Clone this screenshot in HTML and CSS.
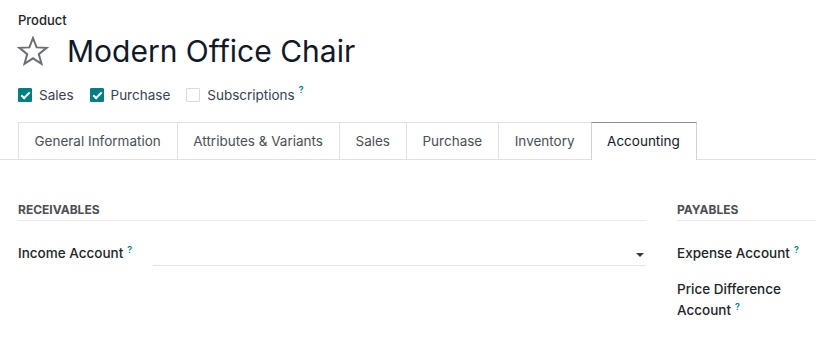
FILE: index.html
```html
<!DOCTYPE html>
<html lang="en">
<head>
    <meta charset="UTF-8">
    <title>Modern Office Chair</title>
    <link rel="stylesheet" href="styles.css">
</head>
<body>
    <div class="sheet">
        <div class="title-block">
            <div class="model-label">Product</div>
            <div class="title-row">
                <svg class="star" width="32" height="30" viewBox="0 0 32 30">
                    <path d="M16 2 L19.6 11.4 L29.6 11.8 L21.8 18.1 L24.5 27.8 L16 22.3 L7.5 27.8 L10.2 18.1 L2.4 11.8 L12.4 11.4 Z" fill="none" stroke="#6b6f75" stroke-width="2" stroke-linejoin="miter"/>
                </svg>
                <h1 class="title">Modern Office Chair</h1>
            </div>
        </div>

        <div class="options">
            <label class="opt"><span class="box checked"></span>Sales</label>
            <label class="opt"><span class="box checked"></span>Purchase</label>
            <label class="opt"><span class="box"></span>Subscriptions<sup class="help">?</sup></label>
        </div>

        <div class="tabs">
            <div class="tab">General Information</div>
            <div class="tab">Attributes &amp; Variants</div>
            <div class="tab">Sales</div>
            <div class="tab">Purchase</div>
            <div class="tab">Inventory</div>
            <div class="tab active">Accounting</div>
        </div>

        <div class="groups">
            <div class="group receivables">
                <div class="group-title">Receivables</div>
                <div class="field">
                    <div class="field-label">Income Account<sup class="help">?</sup></div>
                    <div class="field-input">
                        <span class="caret"></span>
                    </div>
                </div>
            </div>
            <div class="group payables">
                <div class="group-title">Payables</div>
                <div class="field">
                    <div class="field-label">Expense Account<sup class="help">?</sup></div>
                </div>
                <div class="field">
                    <div class="field-label">Price Difference Account<sup class="help">?</sup></div>
                </div>
            </div>
        </div>
    </div>
</body>
</html>
```

FILE: styles.css
```css
body {
    margin: 0;
    font-family: Inter, Roboto, sans-serif;
    font-size: 13.5px;
    color: #212529;
    background-color: #fff;
}

.sheet {
    padding: 11px 0 0 18px;
}

.model-label {
    font-size: 13px;
    font-weight: 500;
    line-height: 18px;
    color: #212529;
}

.title-row {
    display: flex;
    align-items: center;
    gap: 18px;
    margin-top: 3px;
}

.star {
    display: block;
    margin-left: -1px;
}

.title {
    margin: 0;
    font-size: 30px;
    font-weight: 400;
    line-height: 38px;
    color: #111827;
}

.options {
    display: flex;
    align-items: center;
    margin-top: 15px;
    height: 20px;
}

.opt {
    display: flex;
    align-items: center;
    margin-right: 16px;
    color: #374151;
}

.box {
    width: 14px;
    height: 14px;
    box-sizing: border-box;
    border: 1px solid #d8dadd;
    border-radius: 1px;
    margin-right: 7px;
    position: relative;
}

.box.checked {
    background-color: #017e84;
    border-color: #017e84;
}

.box.checked::after {
    content: "";
    position: absolute;
    left: 4px;
    top: 1px;
    width: 3px;
    height: 7px;
    border: solid #fff;
    border-width: 0 2px 2px 0;
    transform: rotate(45deg);
}

.help {
    color: #017e84;
    font-size: 9px;
    font-weight: 600;
    margin-left: 4px;
    vertical-align: baseline;
    line-height: 0;
    position: relative;
    top: -5px;
}

.tabs {
    display: flex;
    margin: 17px 0 0 -18px;
    padding-left: 18px;
    border-bottom: 1px solid #dee2e6;
}

.tab {
    padding: 0 16px 0 15.5px;
    height: 36px;
    line-height: 37px;
    border: 1px solid #dee2e6;
    border-bottom: none;
    margin-right: -1px;
    color: #495057;
    background-color: #fff;
}

.tab.active {
    color: #111827;
    border-color: #cfd3d7;
    border-top-color: #8b8f94;
    margin-bottom: -1px;
    height: 37px;
    position: relative;
}

.groups {
    display: flex;
    margin-top: 42px;
}

.group-title {
    font-size: 12px;
    font-weight: 700;
    text-transform: uppercase;
    color: #4a4f55;
    padding-bottom: 3px;
    border-bottom: 1px solid #e7e9ed;
}

.receivables {
    width: 628px;
}

.payables {
    flex: 1;
    margin-left: 31px;
}

.field {
    display: flex;
    align-items: flex-start;
    margin-top: 22px;
}

.payables .field + .field {
    margin-top: 15px;
}

.field-label {
    font-weight: 500;
    color: #212529;
    line-height: 21px;
    width: 135px;
}

.payables .field-label {
    width: 128px;
}

.field-input {
    flex: 1;
    height: 22px;
    border-bottom: 1px solid #e2e5e8;
    position: relative;
}

.caret {
    position: absolute;
    right: 2px;
    top: 10px;
    border-left: 4px solid transparent;
    border-right: 4px solid transparent;
    border-top: 4px solid #343a40;
}
```
